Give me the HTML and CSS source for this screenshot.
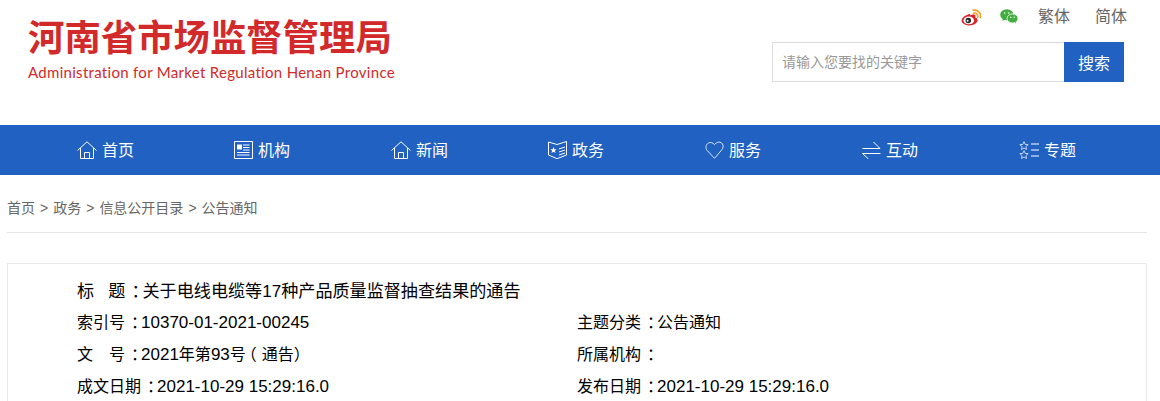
FILE: index.html
```html
<!DOCTYPE html>
<html lang="zh-CN">
<head>
  <meta charset="UTF-8">
  <title>河南省市场监督管理局</title>
  <link rel="stylesheet" href="styles.css">
</head>
<body>
  <div class="header">
    <div class="logo">
      <div class="logo-cn">河南省市场监督管理局</div>
      <div class="logo-en">Administration for Market Regulation Henan Province</div>
    </div>
    <div class="header-right">
      <div class="top-links">
        <svg class="weibo" viewBox="0 0 20 17">
          <path d="M8 5.200C4 6 .6 9 .6 11.600c0 2.900 3.600 4.800 7.600 4.800 4.900 0 8.400-2.800 8.400-5.200 0-1.700-1.500-2.300-2.400-2.600.6-1.500.3-2.700-1-3-1.200-.3-2.900.4-3.700.8-.1-1.300-.9-1.800-2.500-1.200z" fill="#d8252b"/>
          <ellipse cx="7.800" cy="11.400" rx="5.300" ry="3.900" fill="#fff"/>
          <circle cx="7.300" cy="11.500" r="2.700" fill="#222"/>
          <circle cx="6.600" cy="11.800" r="1" fill="#fff"/>
          <path d="M12.500 4.300c2.600-.7 4.700 1.200 4.100 3.800M12.300 1.200c4.700-1 8.200 3.200 6.900 7.400" fill="none" stroke="#f2a32c" stroke-width="1.700" stroke-linecap="round"/>
        </svg>
        <svg class="wechat" viewBox="0 0 18 15">
          <ellipse cx="6.800" cy="5.700" rx="6.600" ry="5.500" fill="#43ad3f"/>
          <path d="M3 9l-.6 3 3-1.800z" fill="#43ad3f"/>
          <ellipse cx="12.500" cy="9.500" rx="5.500" ry="4.500" fill="#43ad3f" stroke="#fff" stroke-width=".8"/>
          <path d="M15 13l1 1.800-.2-2.500z" fill="#43ad3f"/>
          <circle cx="4.700" cy="4" r=".8" fill="#fff"/>
          <circle cx="8.800" cy="4" r=".8" fill="#fff"/>
          <circle cx="10.800" cy="8.300" r=".7" fill="#fff"/>
          <circle cx="14.200" cy="8.300" r=".7" fill="#fff"/>
        </svg>
        <a href="#" class="lang-first">繁体</a>
        <a href="#" class="lang-second">简体</a>
      </div>
      <div class="search">
        <input class="search-input" type="text" placeholder="请输入您要找的关键字">
        <button class="search-btn">搜索</button>
      </div>
    </div>
  </div>

  <div class="nav">
    <a href="#" class="nav-item">
      <svg viewBox="0 0 20 18"><path d="M.5 9.500 10 .8l9.500 8.700M3.500 7v10.500h13V7M7.500 17.500v-6h5v6"/></svg>
      首页
    </a>
    <a href="#" class="nav-item nav-narrow">
      <svg viewBox="0 0 19 18"><path d="M.5.500h18v17H.5zM9 4h6.500M9 6.500h6.500M9 9h6.500M3 11.500h12.500M3 14h12.500"/><path class="solid" d="M3 3.500h5v5H3z"/></svg>
      机构
    </a>
    <a href="#" class="nav-item">
      <svg viewBox="0 0 20 18"><path d="M.5 9.500 10 .8l9.500 8.700M3.500 7v10.500h13V7M7.500 17.500v-6h5v6"/></svg>
      新闻
    </a>
    <a href="#" class="nav-item nav-narrow">
      <svg viewBox="0 0 19 18"><path d="M.5 1 9 3.500l9.500-3V14L9 17.700.5 14zM11 8l6-2M11 11l6-2M11 14l6-2"/><path class="solid" d="m5.500 6 .9 2.200 2.200.1-1.700 1.400.6 2.200-2-1.200-2 1.200.6-2.200-1.700-1.400 2.200-.1z"/></svg>
      政务
    </a>
    <a href="#" class="nav-item nav-narrow">
      <svg class="heart" viewBox="0 0 19 18"><path d="M9.500 17.300 2 9.300C.2 7 .8 3.400 3.500 2c2.200-1.100 4.400-.3 6 1.700l2-2c2.300-1.200 4.800-.7 6 1.300 1 1.800.8 4.200-.7 5.800z"/></svg>
      服务
    </a>
    <a href="#" class="nav-item nav-narrow">
      <svg viewBox="0 0 19 18"><path d="M.5 7.500H18L11.500 1M18.500 12.500H.5l6 5.500"/></svg>
      互动
    </a>
    <a href="#" class="nav-item">
      <svg viewBox="0 0 20 18"><path class="thin" d="m5 .6 1.200 2.800 3 .2-2.300 2 .7 2.900L5 7l-2.600 1.500.7-2.900-2.300-2 3-.2zM5 9.600l1.200 2.800 3 .2-2.300 2 .7 2.900L5 16l-2.600 1.500.7-2.900-2.300-2 3-.2z"/><path d="M12 3h8M12 9h8M12 15h8"/></svg>
      专题
    </a>
  </div>

  <div class="main">
    <div class="crumbs">
      <a href="#">首页</a><span class="sep">&gt;</span><a href="#">政务</a><span class="sep">&gt;</span><a href="#">信息公开目录</a><span class="sep">&gt;</span><a href="#">公告通知</a>
    </div>

    <div class="info">
      <div class="info-row info-title">标&nbsp;&nbsp;&nbsp;题<span class="punct">：</span>关于电线电缆等17种产品质量监督抽查结果的通告</div>
      <div class="info-grid">
        <div class="info-row">索引号<span class="punct">：</span><span class="num">10370-01-2021-00245</span></div>
        <div class="info-row">主题分类<span class="punct">：</span>公告通知</div>
        <div class="info-row">文　号<span class="punct">：</span><span class="num">2021</span>年第<span class="num">93</span><span class="tight">号</span><span class="paren-l">（</span>通告）</div>
        <div class="info-row">所属机构<span class="punct">：</span></div>
        <div class="info-row">成文日期<span class="punct">：</span><span class="num">2021-10-29 15:29:16.0</span></div>
        <div class="info-row">发布日期<span class="punct">：</span><span class="num">2021-10-29 15:29:16.0</span></div>
      </div>
    </div>
  </div>
</body>
</html>
```

FILE: styles.css
```css
* {
  margin: 0;
  padding: 0;
  box-sizing: border-box;
}
html, body {
  height: 100%;
  overflow: hidden;
}
body {
  font-family: "Liberation Sans", "Noto Sans CJK SC", sans-serif;
  background: #fff;
  color: #000;
}
a {
  color: inherit;
  text-decoration: none;
}
.header {
  height: 125px;
  display: flex;
  justify-content: space-between;
  padding: 0 36px 0 28px;
}
.logo-cn {
  margin-top: 13px;
  font-size: 36.4px;
  line-height: 51px;
  font-weight: 700;
  color: #d2292a;
  white-space: nowrap;
}
.logo-en {
  font-family: "Lato", sans-serif;
  font-size: 15px;
  line-height: 16px;
  letter-spacing: 0.3px;
  color: #d2292a;
  white-space: nowrap;
}
.header-right {
  width: 352px;
  padding-top: 6px;
}
.top-links {
  height: 36px;
  display: flex;
  align-items: flex-start;
  font-size: 16px;
  line-height: 22px;
  color: #666;
  white-space: nowrap;
}
.weibo {
  flex: none;
  width: 20px;
  height: 17px;
  margin: 3px 0 0 189px;
}
.wechat {
  flex: none;
  width: 18px;
  height: 15px;
  margin: 3px 0 0 19px;
}
.lang-first {
  flex: none;
  margin-left: 20px;
}
.lang-second {
  flex: none;
  margin-left: 25px;
}
.search {
  display: flex;
  height: 40px;
  width: 352px;
}
.search-input {
  width: 292px;
  height: 40px;
  padding: 0 9px;
  border: 1px solid #ddd;
  border-right: 0;
  outline: 0;
  font-family: inherit;
  font-size: 14px;
}
.search-input::placeholder {
  color: #999;
  opacity: 1;
}
.search-btn {
  width: 60px;
  height: 40px;
  border: 0;
  background: #2161c2;
  color: #fff;
  font-family: inherit;
  font-size: 16px;
}
.nav {
  height: 50px;
  background: #2161c2;
  display: flex;
  padding-left: 77px;
}
.nav-item {
  flex: none;
  width: 157px;
  padding-bottom: 2px;
  display: flex;
  align-items: center;
  gap: 5px;
  color: #fff;
  font-size: 16px;
}
.nav-item svg {
  width: 20px;
  height: 18px;
  margin-top: 2px;
  fill: none;
  stroke: #fff;
  stroke-width: 1;
}
.nav-item.nav-narrow svg {
  width: 19px;
}
.nav-item .heart {
  stroke: #dbe5f5;
}
.nav-item .solid {
  fill: #fff;
  stroke: none;
}
.nav-item .thin {
  stroke: #c4d4ee;
}
.main {
  width: 1140px;
  margin-left: 7px;
}
.crumbs {
  height: 58px;
  padding-top: 23px;
  border-bottom: 1px solid #e5e5e5;
  font-size: 14px;
  line-height: 20px;
  color: #666;
}
.sep {
  margin: 0 5px;
}
.info {
  margin-top: 30px;
  padding: 12px 0 0 69px;
  border: 1px solid #e8e8e8;
  border-bottom: 0;
}
.info-row {
  height: 32px;
  font-size: 16px;
  line-height: 32px;
  white-space: nowrap;
}
.info-title {
  height: 31px;
  font-size: 17.1px;
}
.info-grid {
  display: grid;
  grid-template-columns: 500px 1fr;
}
.num {
  font-size: 17px;
}
/* full width punctuation sits centred in its cell here */
.punct {
  padding-left: 6px;
  letter-spacing: -6px;
}
.tight {
  letter-spacing: -5px;
}
.paren-l {
  padding-right: 5px;
}
```
